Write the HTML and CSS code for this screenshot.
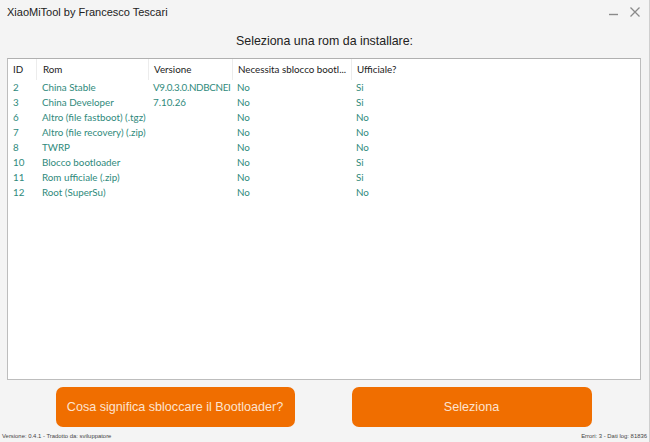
FILE: index.html
```html
<!DOCTYPE html>
<html lang="it">
<head>
<meta charset="utf-8">
<title>XiaoMiTool</title>
<link rel="stylesheet" href="styles.css">
</head>
<body>
<div class="window">
  <div class="titlebar">
    <span class="title">XiaoMiTool by Francesco Tescari</span>
    <div class="controls">
      <svg class="ctl" width="12" height="12" viewBox="0 0 12 12"><line x1="1" y1="8.5" x2="10" y2="8.5" stroke="#8a8a8a" stroke-width="1.4"/></svg>
      <svg class="ctl" width="12" height="12" viewBox="0 0 12 12"><path d="M1.5 1.5 L10.5 10.5 M10.5 1.5 L1.5 10.5" stroke="#8a8a8a" stroke-width="1.3" fill="none"/></svg>
    </div>
  </div>
  <div class="heading">Seleziona una rom da installare:</div>
  <div class="panel">
    <div class="row head">
      <div class="c c-id">ID</div>
      <div class="c c-rom">Rom</div>
      <div class="c c-ver">Versione</div>
      <div class="c c-nec">Necessita sblocco bootl...</div>
      <div class="c c-uff">Ufficiale?</div>
    </div>
    <div class="row"><div class="c c-id">2</div><div class="c c-rom">China Stable</div><div class="c c-ver v-tight">V9.0.3.0.NDBCNEI</div><div class="c c-nec">No</div><div class="c c-uff">Si</div></div>
    <div class="row"><div class="c c-id">3</div><div class="c c-rom">China Developer</div><div class="c c-ver">7.10.26</div><div class="c c-nec">No</div><div class="c c-uff">Si</div></div>
    <div class="row"><div class="c c-id">6</div><div class="c c-rom">Altro (file fastboot) (.tgz)</div><div class="c c-ver"></div><div class="c c-nec">No</div><div class="c c-uff">No</div></div>
    <div class="row"><div class="c c-id">7</div><div class="c c-rom">Altro (file recovery) (.zip)</div><div class="c c-ver"></div><div class="c c-nec">No</div><div class="c c-uff">No</div></div>
    <div class="row"><div class="c c-id">8</div><div class="c c-rom">TWRP</div><div class="c c-ver"></div><div class="c c-nec">No</div><div class="c c-uff">No</div></div>
    <div class="row"><div class="c c-id">10</div><div class="c c-rom">Blocco bootloader</div><div class="c c-ver"></div><div class="c c-nec">No</div><div class="c c-uff">Si</div></div>
    <div class="row"><div class="c c-id">11</div><div class="c c-rom">Rom ufficiale (.zip)</div><div class="c c-ver"></div><div class="c c-nec">No</div><div class="c c-uff">Si</div></div>
    <div class="row"><div class="c c-id">12</div><div class="c c-rom">Root (SuperSu)</div><div class="c c-ver"></div><div class="c c-nec">No</div><div class="c c-uff">No</div></div>
  </div>
  <div class="buttons">
    <button class="btn btn-left">Cosa significa sbloccare il Bootloader?</button>
    <button class="btn btn-right">Seleziona</button>
  </div>
  <div class="footer">
    <span>Versione: 0.4.1 - Tradotto da: sviluppatore</span>
    <span>Errori: 3 - Dati log: 81836</span>
  </div>
</div>
</body>
</html>
```
FILE: styles.css
```css
html, body {
  margin: 0;
  padding: 0;
}
body {
  width: 650px;
  height: 442px;
  overflow: hidden;
  background: #f4f4f4;
  font-family: "Liberation Sans", Arial, sans-serif;
}
.window {
  width: 650px;
  height: 442px;
  box-sizing: border-box;
  border-right: 1px solid #cfcfcf;
  display: flex;
  flex-direction: column;
}
.titlebar {
  height: 24px;
  display: flex;
  align-items: center;
  justify-content: space-between;
  padding: 0 8px 0 7px;
}
.title {
  font-size: 11px;
  color: #222;
}
.controls {
  display: flex;
  gap: 9px;
  align-items: center;
}
.ctl {
  display: block;
}
.heading {
  height: 34px;
  line-height: 34px;
  text-align: center;
  font-size: 12.4px;
  color: #222;
}
.panel {
  height: 322px;
  margin: 0 8px 0 7px;
  box-sizing: border-box;
  background: #fff;
  border: 1px solid #bdbdbd;
  border-top-color: #b0b0b0;
  font-family: "Lato", "Noto Sans", sans-serif;
  font-size: 9.8px;
}
.row {
  display: grid;
  grid-template-columns: 28px 112px 84px 119px 1fr;
  height: 15px;
  line-height: 15px;
  color: #2f8a7c;
}
.row.head {
  height: 21px;
  line-height: 21px;
  color: #222;
}
.c {
  padding-left: 5px;
  white-space: nowrap;
  overflow: hidden;
}
.c-rom {
  padding-left: 6px;
}
.v-tight {
  letter-spacing: -0.3px;
}
.head .c + .c {
  border-left: 1px solid #ececec;
}
.buttons {
  display: flex;
  justify-content: center;
  gap: 57px;
  margin-top: 7px;
  padding-right: 2px;
}
.btn {
  height: 40px;
  border: none;
  border-radius: 7px;
  background: #f06e00;
  color: #fde3cf;
  font-family: "Liberation Sans", Arial, sans-serif;
  font-size: 12.6px;
  padding: 0;
  white-space: nowrap;
}
.btn-left {
  width: 239px;
}
.btn-right {
  width: 240px;
}
.footer {
  margin-top: 4px;
  display: flex;
  justify-content: space-between;
  padding: 0 2px 0 2px;
  font-size: 5.9px;
  color: #444;
  line-height: 11px;
}
```
